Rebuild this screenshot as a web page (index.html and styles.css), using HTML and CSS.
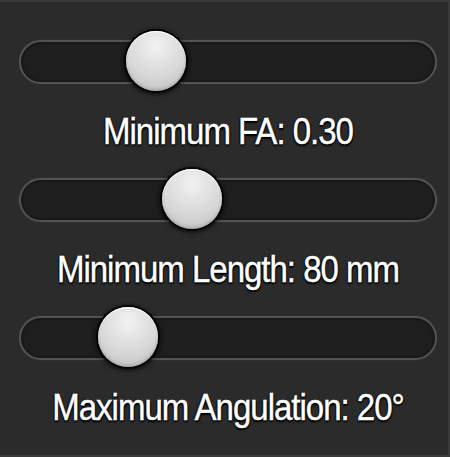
FILE: index.html
```html
<!DOCTYPE html>
<html lang="en">
<head>
  <meta charset="UTF-8">
  <meta name="viewport" content="width=device-width, initial-scale=1.0">
  <title>Tract filters</title>
  <link rel="stylesheet" href="styles.css">
</head>
<body>

  <div class="panel">
    <!-- FA -->
    <div class="slider">
      <div class="track">
        <div class="thumb" style="--v: 0.30;"></div>
      </div>
      <p class="label">Minimum FA: 0.30</p>
    </div>

    <!-- Length -->
    <div class="slider">
      <div class="track">
        <div class="thumb" style="--v: 0.40;"></div>
      </div>
      <p class="label">Minimum Length: 80 mm</p>
    </div>

    <!-- Angulation -->
    <div class="slider">
      <div class="track">
        <div class="thumb" style="--v: 0.222;"></div>
      </div>
      <p class="label">Maximum Angulation: 20°</p>
    </div>
  </div>

</body>
</html>
```

FILE: styles.css
```css
* {
  margin: 0;
  padding: 0;
  box-sizing: border-box;
}

body {
  font-family: 'Liberation Sans', Arial, sans-serif;
  background-color: #2b2b2b;
}

.panel {
  width: 450px;
  height: 457px;
  background-color: #2b2b2b;
  border-top: 2px solid #3a3a3a;
  border-right: 2px solid #3a3a3a;
  border-bottom: 2px solid #3a3a3a;
  padding: 38px 11px 0 19px;
  display: flex;
  flex-direction: column;
  gap: 27px;
}

.slider {
  display: flex;
  flex-direction: column;
  gap: 29px;
}

/* Дорожка */
.track {
  position: relative;
  height: 44px;
  border-radius: 22px;
  background-color: #1e1e1e;
  border: 2px solid #535353;
  box-shadow: inset 0 0 3px rgba(0, 0, 0, 0.7), 0 0 2px rgba(255, 255, 255, 0.08);
}

/* Ползунок */
.thumb {
  position: absolute;
  top: 50%;
  left: calc(var(--v) * (100% - 56px) - 2px);
  width: 60px;
  height: 60px;
  margin-top: -31px;
  border-radius: 50%;
  background: radial-gradient(circle at 50% 25%, #f2f2f2 0%, #d8d8d8 55%, #bdbdbd 100%);
  box-shadow: inset 0 1px 1px #fff, inset 0 -2px 3px rgba(0, 0, 0, 0.15), 0 0 0 2px #050505, 0 1px 5px 2px rgba(0, 0, 0, 0.85);
}

.label {
  height: 38px;
  line-height: 38px;
  text-align: center;
  color: #fff;
  font-size: 33px;
  letter-spacing: -1px;
  -webkit-text-stroke: 0.4px #fff;
  transform: scaleY(1.1);
  text-shadow: 1px 1px 1px #000, -1px 0 1px #000, 0 2px 2px #000;
}
```
